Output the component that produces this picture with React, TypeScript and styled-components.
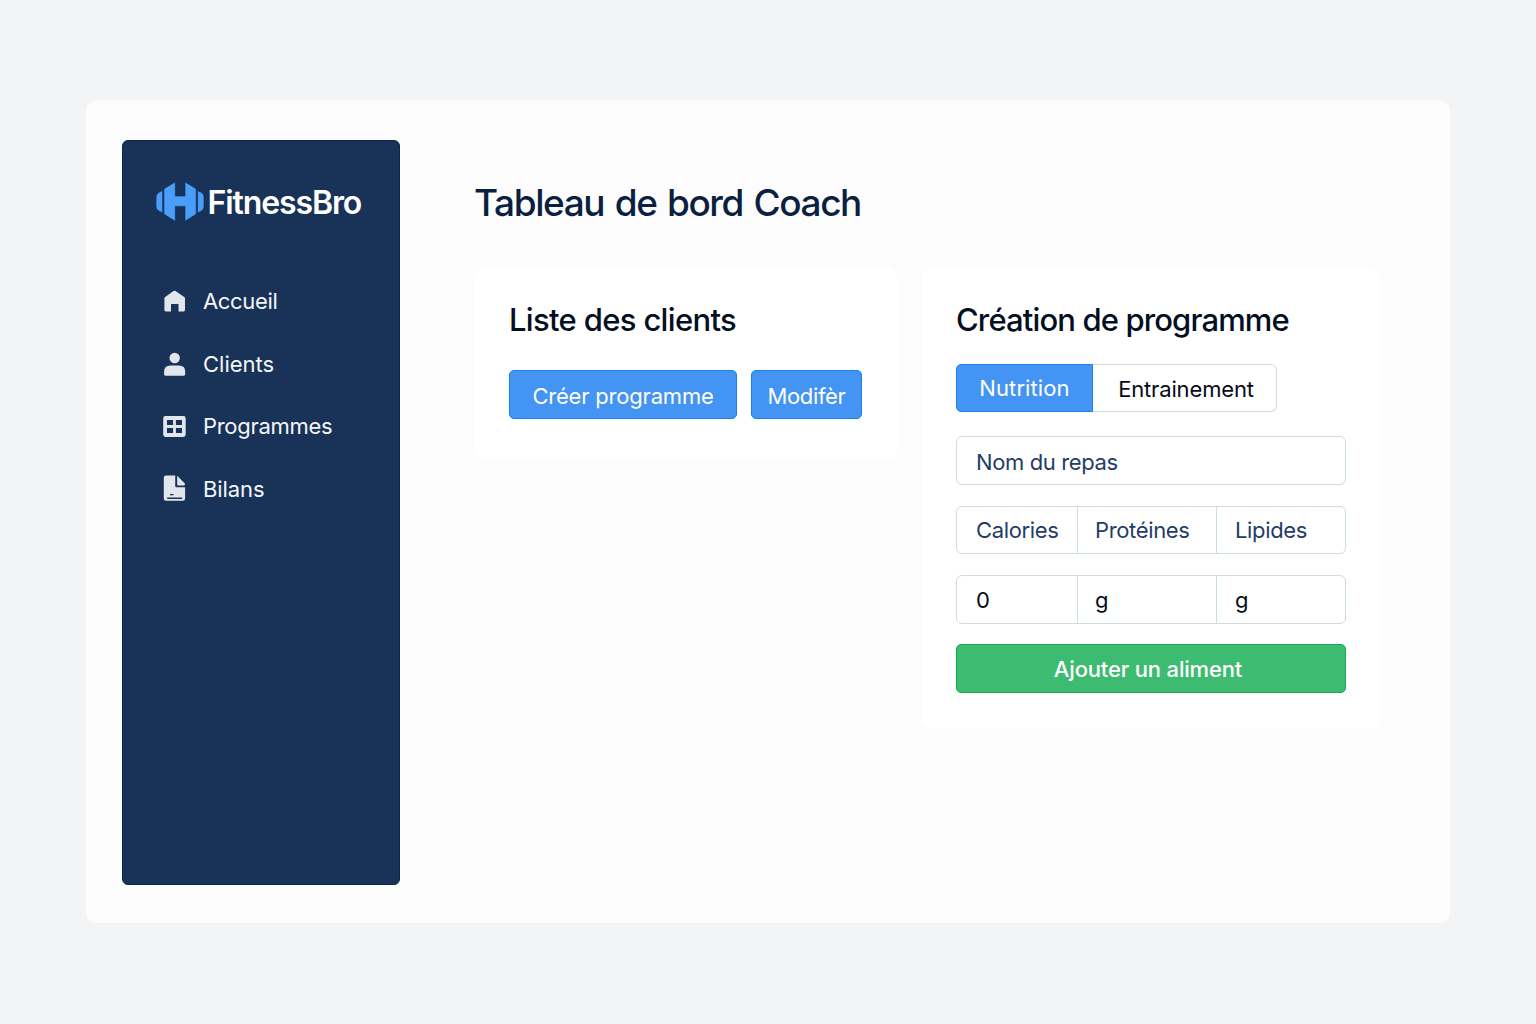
import React from "react";
import styled, { createGlobalStyle, css } from "styled-components";

const Global = createGlobalStyle`
  *, *::before, *::after { box-sizing: border-box; }
  body { margin: 0; background: #f3f4f6; font-family: Inter, "Liberation Sans", sans-serif; }
  button, input { font: inherit; letter-spacing: inherit; }
`;

const Page = styled.div`
  width: 1536px;
  height: 1024px;
  padding: 100px 86px 101px;
  background: #f3f4f6;
`;

const Shell = styled.div`
  display: flex;
  align-items: flex-start;
  height: 823px;
  padding: 40px 36px 38px;
  border-radius: 10px;
  background: #fcfcfc;
`;

const Sidebar = styled.aside`
  flex: none;
  width: 278px;
  height: 745px;
  padding: 40px 33px;
  border: 1px solid #0c2448;
  border-radius: 6px;
  background: #193257;
`;

const Brand = styled.div`
  display: flex;
  align-items: center;
  gap: 2.5px;
  height: 41px;
  margin-bottom: 59px;
  svg { flex: none; fill: #4a9df8; stroke: #0f2a52; stroke-width: 0.6; }
`;

const BrandName = styled.span`
  padding-top: 2px;
  font-size: 32px;
  font-weight: 600;
  line-height: 41px;
  letter-spacing: -1.1px;
  color: #fff;
  white-space: nowrap;
`;

const Nav = styled.nav`
  display: flex;
  flex-direction: column;
  gap: 22.7px;
  padding-left: 6px;
`;

const NavItem = styled.a<{ $track?: number }>`
  display: flex;
  align-items: center;
  gap: 16px;
  height: 40px;
  font-size: 22px;
  letter-spacing: ${(p) => p.$track ?? 0}px;
  color: #f4f6fa;
  svg { flex: none; fill: #e1e6ed; }
`;

const Main = styled.main`
  flex: none;
  width: 905px;
  margin-left: 75px;
  padding-top: 38px;
`;

const Title = styled.h1`
  margin: 0 0 40px -1px;
  font-size: 37px;
  font-weight: 500;
  line-height: 50px;
  letter-spacing: -1.4px;
  word-spacing: 2px;
  color: #0b1f41;
  white-space: nowrap;
`;

const Cards = styled.div`
  display: flex;
  align-items: flex-start;
  gap: 25px;
`;

const Card = styled.section<{ $width: number; $height: number }>`
  width: ${(p) => p.$width}px;
  height: ${(p) => p.$height}px;
  padding: 32px 34px;
  border-radius: 10px;
  background: #fff;
`;

const CardTitle = styled.h2<{ $gap: number; $track: number }>`
  margin: 0 0 ${(p) => p.$gap}px;
  font-size: 31px;
  font-weight: 500;
  line-height: 40px;
  letter-spacing: ${(p) => p.$track}px;
  color: #050f22;
  white-space: nowrap;
`;

const Actions = styled.div`
  display: flex;
  gap: 14px;
`;

const Button = styled.button<{ $width: number; $track: number }>`
  width: ${(p) => p.$width}px;
  height: 49px;
  padding: 2px 0 0;
  border: 1px solid #1b7ff0;
  border-radius: 5px;
  background: #4494f3;
  color: #fff;
  font-size: 22px;
  letter-spacing: ${(p) => p.$track}px;
  white-space: nowrap;
`;

const Tabs = styled.div`
  display: flex;
  width: 321px;
  height: 48px;
  margin-bottom: 24px;
`;

const Tab = styled.button<{ $active?: boolean }>`
  padding: 0;
  font-size: 22px;
  ${(p) =>
    p.$active
      ? css`
          width: 137px;
          border: 1px solid #1b7ff0;
          border-radius: 5px 0 0 5px;
          background: #4494f3;
          color: #fff;
          letter-spacing: 0.1px;
        `
      : css`
          flex: 1;
          padding: 2px 0 0 3px;
          border: 1px solid #cddede;
          border-left: 0;
          border-radius: 0 6px 6px 0;
          background: #fff;
          color: #060b16;
          letter-spacing: -0.15px;
        `}
`;

const Field = styled.input`
  display: block;
  width: 390px;
  height: 49px;
  margin-bottom: 21px;
  padding: 2px 19px 0;
  border: 1px solid #cddede;
  border-radius: 6px;
  background: #fff;
  font-size: 22px;
  letter-spacing: -0.37px;
  &::placeholder { color: #233d67; opacity: 1; }
`;

const Row = styled.div<{ $height: number; $gap: number }>`
  display: grid;
  grid-template-columns: 120px 139px 1fr;
  width: 390px;
  height: ${(p) => p.$height}px;
  margin-bottom: ${(p) => p.$gap}px;
  border: 1px solid #cddede;
  border-radius: 6px;
`;

const Cell = styled.div<{ $value?: boolean }>`
  display: flex;
  align-items: center;
  padding-left: 17px;
  font-size: 22px;
  letter-spacing: -0.36px;
  color: ${(p) => (p.$value ? "#060b16" : "#233d67")};
  &:first-child { padding-left: 19px; }
  &:last-child { padding-left: 18px; }
  & + & { border-left: 1px solid #cddede; }
`;

const Submit = styled.button`
  width: 390px;
  height: 49px;
  padding: 1px 6px 0 0;
  border: 1px solid #16ab50;
  border-radius: 5px;
  background: #3dbb70;
  color: #fff;
  font-size: 22px;
  font-weight: 500;
  letter-spacing: -0.17px;
`;

const Logo = () => (
  <svg width="49" height="42" viewBox="0 0 49 42">
    <path d="M6.6 9.6v22.4l-4.3-2.300Q0 28 0 25.500V16.200Q0 13.500 2.300 11.700Z" />
    <path d="M7.900 7.800 19.300.900V15H29V.900L40.200 7.800V33.200L29 40.200V25.400H19.300V40.200L7.900 33.200Z" />
    <path d="M41.600 9.600v22.400l4.300-2.300Q48 28 48 25.500V16.200Q48 13.500 45.900 11.700Z" />
  </svg>
);

const HomeIcon = () => (
  <svg width="25" height="26" viewBox="0 0 25 26">
    <path d="M12.500 2.700q.5 0 1 .35l8.700 5.850q.8.500.8 1.400V22q0 1.400-1.400 1.400H16.500V15.900H9V23.400H3.800Q2.400 23.400 2.400 22V10.300q0-.9.8-1.400l8.300-5.850q.5-.35 1-.35Z" />
  </svg>
);

const UserIcon = () => (
  <svg width="25" height="26" viewBox="0 0 25 26">
    <circle cx="12.700" cy="7" r="5.200" />
    <path d="M2.100 23.300V20.500Q2.100 14.400 8.500 14.400H16.800Q23.200 14.400 23.200 20.500V23.300Q23.200 24.700 21.800 24.700H3.500Q2.100 24.700 2.100 23.300Z" />
  </svg>
);

const GridIcon = () => (
  <svg width="25" height="26" viewBox="0 0 25 26">
    <path
      fillRule="evenodd"
      d="M3.500 3H21.300Q23.700 3 23.700 5.400V21.600Q23.700 24 21.300 24H3.500Q1.200 24 1.200 21.600V5.400Q1.200 3 3.500 3ZM5 7.100V12.100H11.100V7.100ZM13.900 7.100V12.100H20V7.100ZM5 15.100V20H11.100V15.100ZM13.900 15.100V20H20V15.100Z"
    />
  </svg>
);

const ReportIcon = () => (
  <svg width="25" height="30" viewBox="0 0 25 30">
    <path d="M4 1.500H13.200V12.100Q13.200 13.300 14.400 13.300H23.100V24.500Q23.100 26.800 20.800 26.800H4Q1.800 26.800 1.800 24.500V3.800Q1.800 1.500 4 1.500Z" />
    <path d="M15.200 1.700 22.600 9.300Q23.500 11.500 21.800 11.500H16.400Q15.200 11.500 15.200 10.300Z" />
    <path d="M8 20.600h3.500M5.200 24.300H20.200" stroke="#193257" strokeWidth="1.400" fill="none" />
  </svg>
);

export default function App() {
  return (
    <>
      <Global />
      <Page>
        <Shell>
          <Sidebar>
            <Brand>
              <Logo />
              <BrandName>FitnessBro</BrandName>
            </Brand>
            <Nav>
              <NavItem $track={-0.35}><HomeIcon />Accueil</NavItem>
              <NavItem><UserIcon />Clients</NavItem>
              <NavItem $track={-0.3}><GridIcon />Programmes</NavItem>
              <NavItem $track={-0.1}><ReportIcon />Bilans</NavItem>
            </Nav>
          </Sidebar>
          <Main>
            <Title>Tableau de bord Coach</Title>
            <Cards>
              <Card $width={422} $height={191}>
                <CardTitle $gap={30} $track={-0.67}>Liste des clients</CardTitle>
                <Actions>
                  <Button $width={228} $track={-0.2}>Créer programme</Button>
                  <Button $width={111} $track={-0.35}>Modifèr</Button>
                </Actions>
              </Card>
              <Card $width={458} $height={461}>
                <CardTitle $gap={24} $track={-0.87}>Création de programme</CardTitle>
                <Tabs>
                  <Tab $active>Nutrition</Tab>
                  <Tab>Entrainement</Tab>
                </Tabs>
                <Field placeholder="Nom du repas" />
                <Row $height={48} $gap={21}>
                  <Cell>Calories</Cell>
                  <Cell>Protéines</Cell>
                  <Cell>Lipides</Cell>
                </Row>
                <Row $height={49} $gap={20}>
                  <Cell $value>0</Cell>
                  <Cell $value>g</Cell>
                  <Cell $value>g</Cell>
                </Row>
                <Submit>Ajouter un aliment</Submit>
              </Card>
            </Cards>
          </Main>
        </Shell>
      </Page>
    </>
  );
}
